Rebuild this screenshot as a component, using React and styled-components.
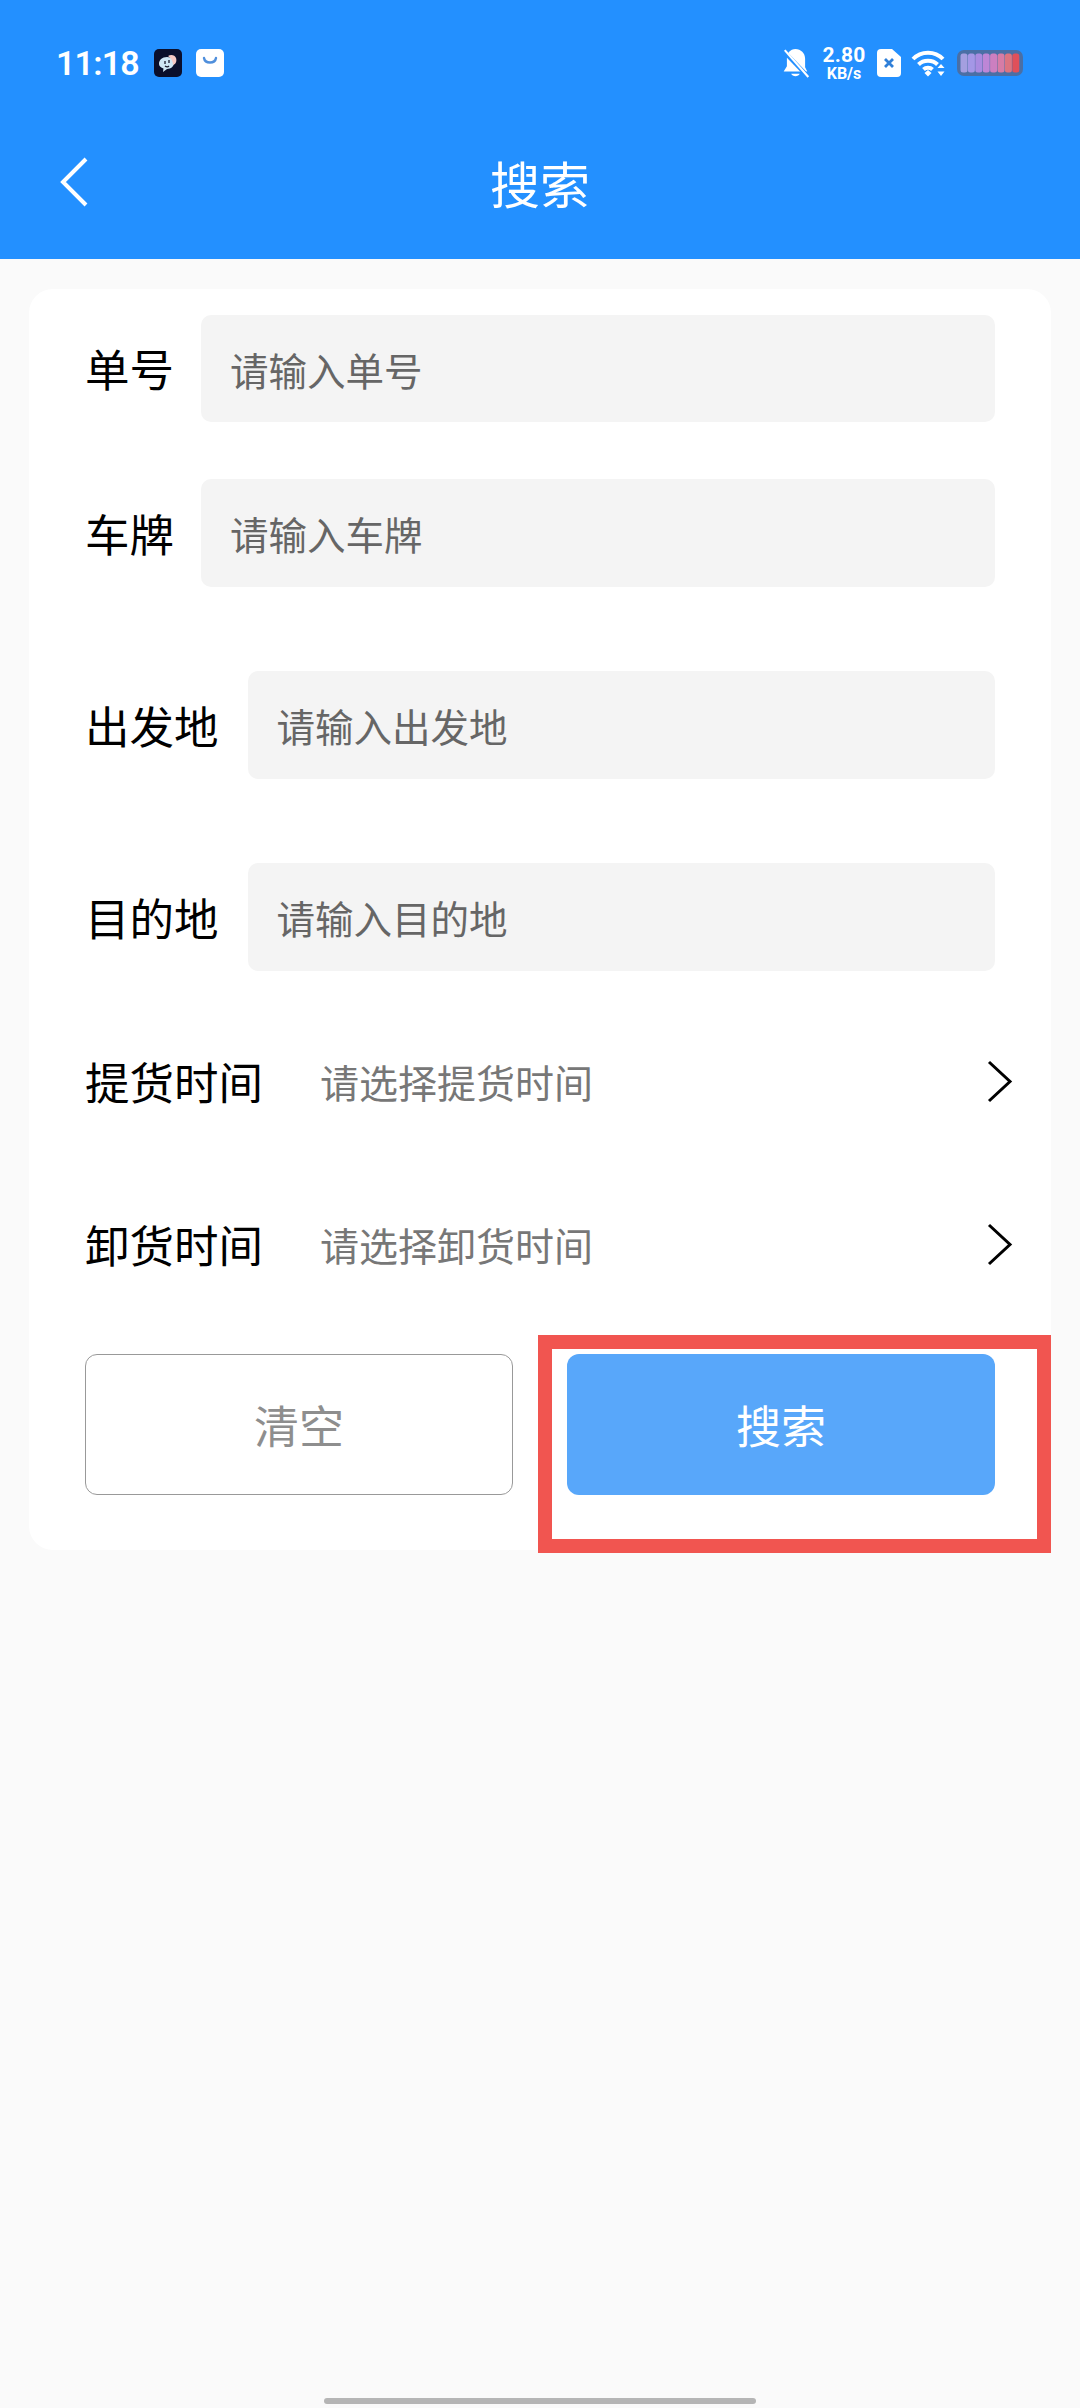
import styled, { createGlobalStyle } from "styled-components";

const GlobalStyle = createGlobalStyle`
  html, body {
    margin: 0;
    padding: 0;
    background: #fafafa;
    font-family: "Noto Sans CJK SC", "Noto Sans", sans-serif;
  }
  * { box-sizing: border-box; }
`;

const Page = styled.div`
  position: relative;
  width: 1080px;
  height: 2408px;
  display: flex;
  flex-direction: column;
  overflow: hidden;
  background: #fafafa;
`;

const Header = styled.header`
  background: #2390ff;
  height: 259px;
  color: #fff;
`;

const StatusBar = styled.div`
  height: 104px;
  padding: 22px 57px 0 56px;
  display: flex;
  align-items: center;
`;

const Clock = styled.span`
  font-family: Roboto, sans-serif;
  font-size: 34px;
  font-weight: 600;
  width: 98px;
  letter-spacing: -0.8px;
`;

const NotifyIcon = styled.svg`
  width: 28px;
  height: 28px;
  margin-right: 14px;
  display: block;
`;

const StatusRight = styled.div`
  margin-left: auto;
  display: flex;
  align-items: center;
`;

const Speed = styled.div`
  font-family: Roboto, sans-serif;
  font-weight: 700;
  text-align: center;
  margin: 0 10px 0 11px;
  width: 46px;
  display: flex;
  flex-direction: column;
  align-items: center;
  line-height: 1;
  b { font-size: 21px; font-weight: 700; line-height: 20px; letter-spacing: 0.2px; }
  i { font-size: 16px; font-style: normal; line-height: 17px; }
`;

const NavBar = styled.div`
  height: 155px;
  padding: 0 60px;
  display: grid;
  grid-template-columns: 1fr auto 1fr;
  align-items: center;
`;

const Title = styled.h1`
  margin: 0;
  font-size: 50px;
  font-weight: 400;
  line-height: 1;
`;

const Card = styled.main`
  margin: 30px 29px 0 29px;
  height: 1261px;
  padding: 26px 56px 0 56px;
  background: #fff;
  border-radius: 24px;
`;

const Row = styled.div`
  display: flex;
  align-items: center;
  height: ${(p) => p.$height}px;
  margin-bottom: ${(p) => p.$gap}px;
`;

const Label = styled.label`
  color: #000;
  font-size: 44.5px;
  line-height: 1;
  flex: none;
  margin-right: ${(p) => p.$space}px;
`;

const Field = styled.div`
  flex: 1;
  height: 100%;
  background: #f4f4f4;
  border-radius: 10px;
  display: flex;
  align-items: center;
  padding-left: 29px;
  color: #666;
  font-size: 38.5px;
`;

const PickValue = styled.span`
  flex: 1;
  color: #777;
  font-size: 39px;
  line-height: 1;
`;

const ArrowIcon = styled.svg`
  width: 26px;
  height: 43px;
  margin-right: -18px;
  flex: none;
`;

const Buttons = styled.div`
  display: flex;
  justify-content: space-between;
`;

const Button = styled.button`
  width: 428px;
  height: 141px;
  border-radius: 12px;
  font-family: inherit;
  font-size: 45px;
  padding: 0;
  border: ${(p) => (p.$primary ? "none" : "1px solid #999")};
  background: ${(p) => (p.$primary ? "#58a7fa" : "#fff")};
  color: ${(p) => (p.$primary ? "#fff" : "#8e8e8e")};
`;

const Highlight = styled.div`
  position: absolute;
  left: 538px;
  top: 1335px;
  width: 513px;
  height: 218px;
  border: 14px solid #f15550;
  pointer-events: none;
`;

const HomeBar = styled.div`
  margin: auto auto 4px;
  width: 432px;
  height: 6px;
  border-radius: 3px;
  background: #b5b5b5;
`;

const Chevron = () => (
  <ArrowIcon viewBox="0 0 26 43">
    <path d="M2 2 L23 21.5 L2 41" fill="none" stroke="#000" strokeWidth="3" />
  </ArrowIcon>
);

const BackIcon = () => (
  <svg width="28" height="50" viewBox="0 0 28 50">
    <path d="M26 2 L3 25 L26 48" fill="none" stroke="#fff" strokeWidth="4" />
  </svg>
);

const rows = [
  { label: "单号", space: 27, height: 107, gap: 57 },
  { label: "车牌", space: 27, height: 108, gap: 84 },
  { label: "出发地", space: 29, height: 108, gap: 84 },
  { label: "目的地", space: 29, height: 108, gap: 88 },
];

const picks = [
  { label: "提货时间", gap: 119 },
  { label: "卸货时间", gap: 88 },
];

const batteryBars = ["#a49fe0", "#a497e6", "#a98be0", "#bd86d6", "#cc7fc0", "#d67ca6", "#dc7480", "#e0505a"];

export default function App() {
  return (
    <Page>
      <GlobalStyle />
      <Header>
        <StatusBar>
          <Clock>11:18</Clock>
          <NotifyIcon viewBox="0 0 28 28">
            <rect width="28" height="28" rx="5" fill="#0a0f2c" />
            <path d="M5 15c0-4 3-7 8-7s7 3 7 6-3 6-7 6l-4 3 .5-3.5C7 18.5 5 17 5 15z" fill="#cfe6f5" />
            <path d="M14 7c3-2 7-1 8 2s0 6-3 7c0-4-2-7-5-9z" fill="#f6c9c4" />
            <path d="M11 12v3M15 11v3M11 17c1.500 1 3 1 4 0" stroke="#1a1a2e" strokeWidth="1.300" fill="none" />
          </NotifyIcon>
          <NotifyIcon viewBox="0 0 28 28">
            <rect width="28" height="28" rx="5" fill="#fff" />
            <path d="M8 9c1 6 11 6 12 0" fill="none" stroke="#4f8fdc" strokeWidth="2.400" strokeLinecap="round" />
          </NotifyIcon>
          <StatusRight>
            <svg width="28" height="30" viewBox="0 0 25 28">
              <path d="M12 1c-5 0-8 4-8 9v7l-3 5h22l-2-4-13-14 13 14v-8c0-5-4-9-9-9z" fill="#fff" />
              <path d="M8 24c1 3 7 3 8 0z" fill="#fff" />
              <path d="M1 3l23 24" stroke="#2390ff" strokeWidth="4" />
              <path d="M2 2l22 25" stroke="#fff" strokeWidth="2" />
            </svg>
            <Speed>
              <b>2.80</b>
              <i>KB/s</i>
            </Speed>
            <svg width="24" height="28" viewBox="0 0 24 28">
              <path d="M4 0h11l9 8v16a4 4 0 0 1-4 4H4a4 4 0 0 1-4-4V4a4 4 0 0 1 4-4z" fill="#fff" />
              <path d="M8 10l8 8M16 10l-8 8" stroke="#2f7fd8" strokeWidth="2.800" />
            </svg>
            <svg width="35" height="28" viewBox="0 0 35 28" style={{ marginLeft: 10 }}>
              <path d="M2 10c8-8.500 22-8.500 30 0M7.500 15.500c5-5 14-5 19 0M12.500 20.500c2.500-2.500 6.500-2.500 9 0" fill="none" stroke="#fff" strokeWidth="4" />
              <path d="M13.500 24l3.500-3 3.500 3-3.500 3.500z" fill="#fff" />
              <path d="M30 15l3.500 4h-7zM30 27l3.500-4.500h-7z" fill="#fff" />
            </svg>
            <svg width="66" height="26" viewBox="0 0 66 26" style={{ marginLeft: 11 }}>
              <rect width="66" height="26" rx="7" fill="#4a6fa5" />
              {batteryBars.map((color, i) => (
                <rect key={color} x={3.500 + i * 7.4} y="3.500" width="7" height="19" rx="2.500" fill={color} />
              ))}
            </svg>
          </StatusRight>
        </StatusBar>
        <NavBar>
          <BackIcon />
          <Title>搜索</Title>
        </NavBar>
      </Header>
      <Card>
        {rows.map((row) => (
          <Row key={row.label} $height={row.height} $gap={row.gap}>
            <Label $space={row.space}>{row.label}</Label>
            <Field>请输入{row.label}</Field>
          </Row>
        ))}
        {picks.map((pick) => (
          <Row key={pick.label} $height={44} $gap={pick.gap}>
            <Label $space={57}>{pick.label}</Label>
            <PickValue>请选择{pick.label}</PickValue>
            <Chevron />
          </Row>
        ))}
        <Buttons>
          <Button>清空</Button>
          <Button $primary>搜索</Button>
        </Buttons>
      </Card>
      <Highlight />
      <HomeBar />
    </Page>
  );
}
